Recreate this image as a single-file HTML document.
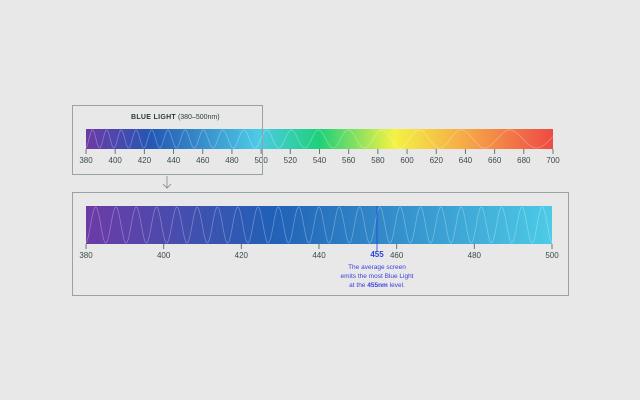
<!DOCTYPE html>
<html><head><meta charset="utf-8"><style>
body{margin:0;width:640px;height:400px;background:#e8e8e8;font-family:"Liberation Sans",sans-serif;overflow:hidden;position:relative}
.box{position:absolute;border:1px solid #9aa3a3;z-index:2}
.lbl{position:absolute;font-size:8px;color:#3c4a4c;transform:translateX(-50%);top:0}
</style></head><body>
<div class="box" style="left:72px;top:105px;width:189px;height:68px"></div>
<div class="box" style="left:72px;top:192px;width:495px;height:102px"></div>
<div style="position:absolute;left:131px;top:114px;font-size:7px;color:#2a3a3c;white-space:nowrap"><b style="letter-spacing:0.3px">BLUE LIGHT</b> (380–500nm)</div>
<svg width="640" height="400" style="position:absolute;left:0;top:0" id="s">
<defs>
<linearGradient id="g1" x1="0" x2="1">
<stop offset="0" stop-color="#6d3aa6"/><stop offset="0.14" stop-color="#2458b4"/><stop offset="0.37" stop-color="#4ccbe6"/><stop offset="0.5" stop-color="#1ed07a"/><stop offset="0.66" stop-color="#f4f244"/><stop offset="0.83" stop-color="#f6a047"/><stop offset="1" stop-color="#ee4a45"/>
</linearGradient>
<linearGradient id="g2" x1="0" x2="1">
<stop offset="0" stop-color="#6d3aa6"/><stop offset="0.4" stop-color="#2160b6"/><stop offset="1" stop-color="#4ccbe6"/>
</linearGradient>
</defs>
<rect x="86" y="129" width="467" height="20" fill="url(#g1)"/>
<rect x="86" y="206" width="466" height="38" fill="url(#g2)"/>
<path id="w1" fill="none" stroke="rgba(255,255,255,0.3)" stroke-width="0.8"/>
<path id="w2" fill="none" stroke="rgba(255,255,255,0.3)" stroke-width="0.8"/>
<line x1="377" y1="206" x2="377" y2="252" stroke="#2d3fe0" stroke-width="0.8"/>
<path d="M167 176V188M163 184L167 188L171 184" fill="none" stroke="#7d8787" stroke-width="0.8"/>
<g id="t" stroke="#6a7474" stroke-width="1"></g>
</svg>
<div id="labels"></div>
<div style="position:absolute;left:377px;top:250px;transform:translateX(-50%);font-size:8px;font-weight:bold;color:#2d3fe0">455</div>
<div style="position:absolute;left:377px;top:263px;transform:translateX(-50%);font-size:6.5px;line-height:9px;color:#3a3fe0;text-align:center;white-space:nowrap">The average screen<br>emits the most Blue Light<br>at the <b>455nm</b> level.</div>
<script>
function wave(x0,x1,yc,a,pf){var d="",ph=0,x=x0;d+="M"+x0+" "+(yc+a);for(x=x0;x<=x1;x+=0.5){ph+=0.5*2*Math.PI/pf(x);d+="L"+x.toFixed(1)+" "+(yc+a*Math.cos(ph)).toFixed(2);}return d;}
document.getElementById('w1').setAttribute('d',wave(86,553,139,9,function(x){var t=(x-86)/467;return 14+44*Math.pow(t,1.6);}));
document.getElementById('w2').setAttribute('d',wave(86,552,225,18,function(x){return 20.3;}));
var t=document.getElementById('t'),L=document.getElementById('labels'),h="",s="";
for(var i=0;i<=16;i++){var x=86+i*467/16;s+='<line x1="'+x+'" y1="149" x2="'+x+'" y2="154"/>';h+='<div class="lbl" style="left:'+x+'px;top:156px">'+(380+i*20)+'</div>';}
for(var i=0;i<=6;i++){var x=86+i*466/6;s+='<line x1="'+x+'" y1="244" x2="'+x+'" y2="249"/>';h+='<div class="lbl" style="left:'+x+'px;top:251px">'+(380+i*20)+'</div>';}
t.innerHTML=s;L.innerHTML=h;
</script>
</body></html>
